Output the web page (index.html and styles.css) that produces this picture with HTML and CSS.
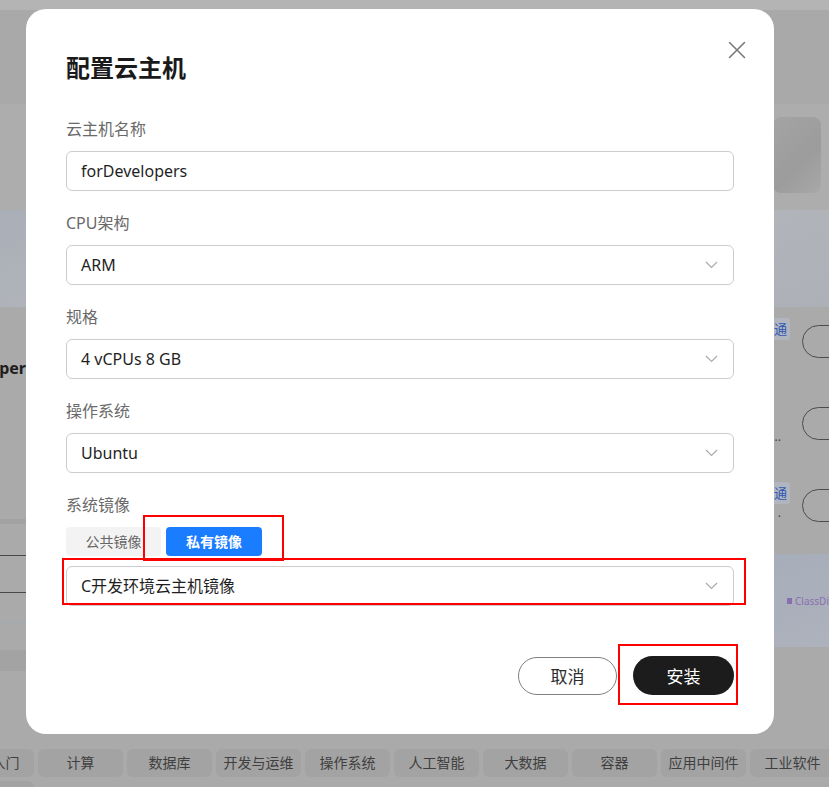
FILE: index.html
```html
<!doctype html>
<html lang="zh-CN">
<head>
    <meta charset="UTF-8">
    <meta name="viewport" content="width=device-width, initial-scale=1.0">
    <title>配置云主机</title>
    <link rel="stylesheet" href="styles.css">
</head>
<body>
    <div class="page">
        <div class="topbar"></div>
        <div class="hero"></div>
        <div class="promo">
            <div class="promo-thumb"></div>
        </div>
        <div class="banner"></div>

        <div class="content">
            <div class="content-left">
                <div class="product-name">forDeveloper</div>
                <div class="strip"></div>
                <div class="rule"></div>
                <div class="rule"></div>
                <div class="rule rule-blue"></div>
                <div class="band"></div>
            </div>
            <div class="content-right">
                <div class="product-row">
                    <div class="product-info"><span class="tag">开通</span></div>
                    <span class="pill-btn"></span>
                </div>
                <div class="product-row">
                    <div class="product-info"><span class="desc">...</span></div>
                    <span class="pill-btn"></span>
                </div>
                <div class="product-row">
                    <div class="product-info"><span class="tag">开通</span><span class="desc">.</span></div>
                    <span class="pill-btn"></span>
                </div>
                <div class="ad-card">
                    <span class="ad-dot"></span>
                    <span class="ad-label">ClassDi</span>
                </div>
            </div>
        </div>

        <div class="category-tabs">
            <div class="category">新手入门</div>
            <div class="category">计算</div>
            <div class="category">数据库</div>
            <div class="category">开发与运维</div>
            <div class="category">操作系统</div>
            <div class="category">人工智能</div>
            <div class="category">大数据</div>
            <div class="category">容器</div>
            <div class="category">应用中间件</div>
            <div class="category">工业软件</div>
            <div class="category"></div>
        </div>
    </div>

    <div class="modal">
        <button class="modal-close" type="button" aria-label="关闭">
            <svg width="18" height="18" viewBox="0 0 18 18">
                <path d="M1.5 1.5 L16.5 16.5 M16.5 1.5 L1.5 16.5" stroke="#7a7a7a" stroke-width="1.6" fill="none" stroke-linecap="round"/>
            </svg>
        </button>

        <h1 class="modal-title">配置云主机</h1>

        <div class="form-group">
            <label>云主机名称</label>
            <div class="field">forDevelopers</div>
        </div>
        <div class="form-group">
            <label>CPU架构</label>
            <div class="field select">ARM
                <svg class="chevron" width="13" height="8" viewBox="0 0 13 8"><path d="M1 1 L6.5 6.5 L12 1" stroke="#aaa" stroke-width="1.2" fill="none"/></svg>
            </div>
        </div>
        <div class="form-group">
            <label>规格</label>
            <div class="field select">4 vCPUs 8 GB
                <svg class="chevron" width="13" height="8" viewBox="0 0 13 8"><path d="M1 1 L6.5 6.5 L12 1" stroke="#aaa" stroke-width="1.2" fill="none"/></svg>
            </div>
        </div>
        <div class="form-group">
            <label>操作系统</label>
            <div class="field select">Ubuntu
                <svg class="chevron" width="13" height="8" viewBox="0 0 13 8"><path d="M1 1 L6.5 6.5 L12 1" stroke="#aaa" stroke-width="1.2" fill="none"/></svg>
            </div>
        </div>
        <div class="form-group last">
            <label>系统镜像</label>
            <div class="image-tabs">
                <div class="image-tab">公共镜像</div>
                <div class="image-tab active">私有镜像</div>
            </div>
            <div class="field select">C开发环境云主机镜像
                <svg class="chevron" width="13" height="8" viewBox="0 0 13 8"><path d="M1 1 L6.5 6.5 L12 1" stroke="#aaa" stroke-width="1.2" fill="none"/></svg>
            </div>
        </div>

        <div class="modal-footer">
            <button class="btn btn-cancel" type="button">取消</button>
            <button class="btn btn-install" type="button">安装</button>
        </div>

        <!-- annotation boxes -->
        <div class="mark mark-tab"></div>
        <div class="mark mark-select"></div>
        <div class="mark mark-install"></div>
    </div>
</body>
</html>
```

FILE: styles.css
```css
* {
    margin: 0;
    padding: 0;
    box-sizing: border-box;
    font-family: "Noto Sans", "Noto Sans CJK SC", sans-serif;
}

body {
    width: 829px;
    height: 787px;
    overflow: hidden;
    background-color: #aaaaaa;
    position: relative;
}

/* dimmed page behind the dialog */
.topbar {
    height: 10px;
    background: #b4b4b4;
}

.hero {
    height: 94px;
    background: #a9a9a9;
}

.promo {
    height: 106px;
    background: #adadad;
    display: flex;
    justify-content: flex-end;
    padding: 13px 8px 0 0;
}

.promo-thumb {
    width: 48px;
    height: 76px;
    border-radius: 8px;
    background: linear-gradient(135deg, #a4a4a4, #9c9c9c 60%, #a8a8a8);
}

.banner {
    height: 97px;
    background: linear-gradient(165deg, #a9aeb7 0%, #b3b6bb 45%, #adb0b6 100%);
}

.content {
    height: 442px;
    display: flex;
    justify-content: space-between;
}

.content-left {
    width: 30px;
    overflow: hidden;
    display: flex;
    flex-direction: column;
}

.product-name {
    margin-top: 49px;
    height: 24px;
    line-height: 24px;
    font-size: 16px;
    font-weight: 700;
    color: #1e1e1e;
    white-space: nowrap;
    direction: rtl;
    text-align: right;
    width: 26px;
    overflow: hidden;
}

.strip {
    margin-top: 139px;
    height: 5px;
    background: #a2a2a2;
}

.rule {
    margin-top: 31px;
    height: 1px;
    background: #484848;
}

.rule + .rule {
    margin-top: 36px;
}

.rule-blue {
    background: #9fa8b5;
}

.rule + .rule.rule-blue {
    margin-top: 29px;
}

.band {
    margin-top: 27px;
    height: 21px;
    background: #a3a3a3;
}

.content-right {
    width: 80px;
    padding-top: 11px;
    overflow: hidden;
}

.product-row {
    height: 82px;
    display: flex;
    gap: 12px;
}

.product-info {
    width: 41px;
    flex-shrink: 0;
    display: flex;
    flex-direction: column;
    align-items: flex-end;
}

.tag {
    width: 32px;
    height: 22px;
    line-height: 22px;
    font-size: 13px;
    text-align: center;
    border-radius: 3px;
    color: #2f57b4;
    background: #b0b5be;
    white-space: nowrap;
}

.desc {
    margin-top: 2px;
    font-size: 12px;
    line-height: 14px;
    color: #444;
    padding-right: 9px;
}

.product-row:nth-child(2) .desc {
    margin-top: 30px;
}

.pill-btn {
    flex-shrink: 0;
    margin-top: 7px;
    width: 60px;
    height: 33px;
    border: 1.5px solid #4c4c4c;
    border-radius: 17px;
}

.ad-card {
    margin-top: -10px;
    height: 93px;
    background: linear-gradient(160deg, #a6adba, #adb2bc);
    padding: 0 0 0 38px;
    display: flex;
    align-items: center;
    gap: 3px;
}

.ad-dot {
    width: 6px;
    height: 6px;
    background: #8a6fb0;
}

.ad-label {
    font-size: 10px;
    color: #8a6fb0;
    white-space: nowrap;
}

.category-tabs {
    width: 890px;
    margin-left: -51px;
    display: flex;
    flex-wrap: wrap;
    gap: 4px;
}

.category {
    width: 85px;
    height: 28px;
    line-height: 28px;
    border-radius: 6px;
    background: #a3a3a3;
    color: #3f3f3f;
    font-size: 14px;
    text-align: center;
}

/* dialog */
.modal {
    position: absolute;
    top: 9px;
    left: 26px;
    width: 748px;
    background: #ffffff;
    border-radius: 20px;
    padding: 43px 40px 39px;
}

.modal-close {
    position: absolute;
    top: 32px;
    left: 702px;
    width: 18px;
    height: 18px;
    border: none;
    background: none;
    cursor: pointer;
}

.modal-close svg {
    display: block;
}

.modal-title {
    font-size: 24px;
    line-height: 32px;
    font-weight: 700;
    color: #1a1a1a;
    margin-bottom: 33px;
}

.form-group {
    margin-bottom: 20px;
}

.form-group.last {
    margin-bottom: 0;
}

label {
    display: block;
    font-size: 16px;
    line-height: 24px;
    color: #6a6a6a;
    margin-bottom: 10px;
}

.field {
    height: 40px;
    border: 1px solid #cccccc;
    border-radius: 6px;
    padding: 0 15px 0 14px;
    font-size: 16px;
    line-height: 38px;
    color: #1f1f1f;
    display: flex;
    align-items: center;
}

.select {
    justify-content: space-between;
}

.image-tabs {
    display: flex;
    gap: 5px;
    margin-bottom: 10px;
}

.image-tab {
    width: 95px;
    height: 29px;
    line-height: 29px;
    border-radius: 4px;
    background: #f3f3f3;
    color: #666;
    font-size: 14px;
    text-align: center;
}

.image-tab.active {
    width: 96px;
    background: #1a7cff;
    color: #ffffff;
    font-weight: 700;
}

.modal-footer {
    margin-top: 50px;
    display: flex;
    justify-content: flex-end;
    align-items: center;
    gap: 16px;
}

.btn {
    height: 38px;
    border-radius: 20px;
    font-size: 17px;
    cursor: pointer;
}

.btn-cancel {
    width: 99px;
    background: #ffffff;
    border: 1px solid #808080;
    color: #2a2a2a;
}

.btn-install {
    width: 101px;
    height: 39px;
    background: #1c1c1c;
    border: none;
    color: #ffffff;
}

.mark {
    position: absolute;
    border: 2px solid #ff0000;
}

.mark-tab {
    left: 117px;
    top: 506px;
    width: 141px;
    height: 46px;
}

.mark-select {
    left: 36px;
    top: 549px;
    width: 684px;
    height: 47px;
}

.mark-install {
    left: 592px;
    top: 635px;
    width: 120px;
    height: 61px;
}
```
